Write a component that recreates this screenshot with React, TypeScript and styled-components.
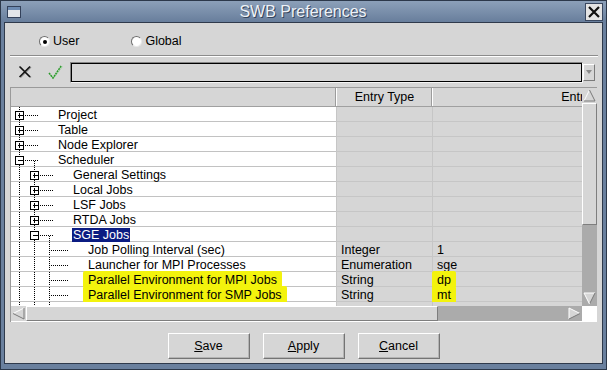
import React from "react";
import styled, { createGlobalStyle } from "styled-components";

const PANEL = "#d6d6d6";
const TRACK = "#ababab";
const FONT = `"Liberation Sans", Arial, sans-serif`;

//#region STYLES
const GlobalStyle = createGlobalStyle`
  html, body {
    margin: 0;
    padding: 0;
    background: ${PANEL};
  }
  body {
    font-family: ${FONT};
    font-size: 12.5px;
    color: #000;
  }
`;
const Frame = styled.div`
  width: 607px;
  height: 370px;
  box-sizing: border-box;
  display: flex;
  flex-direction: column;
  background: #6a809e;
  border: 1px solid #2c384a;
  padding: 0 3px 5px 3px;
`;
const TitleBar = styled.div`
  height: 21px;
  flex-shrink: 0;
  display: flex;
  align-items: center;
  margin: 0 -3px;
  padding: 0 3px 0 6px;
  background: linear-gradient(#8ca0b9, #687e9c);
`;
const Title = styled.div`
  flex: 1;
  text-align: center;
  font-size: 16px;
  color: #eef2f7;
  text-shadow: 1px 1px 0 #34445c;
`;
const CloseButton = styled.div`
  width: 18px;
  height: 18px;
  box-sizing: border-box;
  background: #e4e4e4;
  border: 1px solid #3a4860;
  display: flex;
  align-items: center;
  justify-content: center;
`;
const Body = styled.div`
  flex: 1;
  display: flex;
  flex-direction: column;
  background: ${PANEL};
  border: 1px solid #2f3a4c;
`;
const RadioRow = styled.div`
  height: 32px;
  box-sizing: border-box;
  padding: 5px 0 0 34px;
  display: flex;
  align-items: center;
`;
const RadioOption = styled.label<{ $gap: number }>`
  display: flex;
  align-items: center;
  gap: 3px;
  margin-right: ${(p) => p.$gap}px;
  line-height: 15px;
`;
const RadioDot = styled.span<{ $on: boolean }>`
  width: 11px;
  height: 11px;
  box-sizing: border-box;
  border-radius: 50%;
  background: #fff;
  border: 1px solid;
  border-color: #6e6e6e #e8e8e8 #e8e8e8 #6e6e6e;
  display: flex;
  align-items: center;
  justify-content: center;

  &::after {
    content: "";
    width: 4px;
    height: 4px;
    border-radius: 50%;
    background: ${(p) => (p.$on ? "#000" : "transparent")};
  }
`;
const Separator = styled.div`
  margin: 0 4px 0 5px;
  border-top: 1px solid #8c8c8c;
  border-bottom: 1px solid #fff;
`;
const Toolbar = styled.div`
  height: 30px;
  display: flex;
  align-items: center;
  padding: 0 7px 0 13px;
`;
const ToolIcon = styled.svg<{ $gap: number }>`
  flex-shrink: 0;
  margin-right: ${(p) => p.$gap}px;
`;
const Field = styled.div`
  flex: 1;
  height: 21px;
  box-sizing: border-box;
  border: 1px solid;
  border-color: #858585 #f4f4f4 #f4f4f4 #858585;
  box-shadow: inset 1px 1px 0 #000, inset -1px -1px 0 #000;
  background: ${PANEL};
`;
const DropButton = styled.div`
  width: 12px;
  height: 17px;
  box-sizing: border-box;
  border: 1px solid;
  border-color: #fff #7a7a7a #7a7a7a #fff;
  display: flex;
  align-items: center;
  justify-content: center;
`;
const TableFrame = styled.div`
  align-self: flex-start;
  margin-left: 5px;
  border-left: 1px solid #9a9a9a;
  border-top: 1px solid #9a9a9a;
  display: grid;
  grid-template-columns: 571px 15px;
  grid-template-rows: 218px 16px;
`;
const View = styled.div`
  overflow: hidden;
  background: #fff;
`;
const HeaderRow = styled.div`
  display: flex;
  height: 19px;
  box-sizing: border-box;
  border-bottom: 1px solid #a0a0a0;
  background: ${PANEL};
`;
const ColHeader = styled.div<{ $w: number; $first?: boolean }>`
  width: ${(p) => p.$w}px;
  flex-shrink: 0;
  box-sizing: border-box;
  border-left: ${(p) => (p.$first ? "none" : "1px solid #fff")};
  box-shadow: inset -1px 0 0 #9c9c9c;
  line-height: 18px;
  text-align: center;
  white-space: nowrap;
`;
const Row = styled.div`
  display: flex;
  height: 15px;
`;
const TreeCell = styled.div`
  width: 325px;
  height: 15px;
  flex-shrink: 0;
  box-sizing: border-box;
  display: flex;
  align-items: flex-start;
  background: #fff;
  border-bottom: 1px solid #c2c2c2;
`;
const DataCell = styled.div<{ $w: number }>`
  width: ${(p) => p.$w}px;
  height: 15px;
  flex-shrink: 0;
  box-sizing: border-box;
  padding-left: 4px;
  background: ${PANEL};
  border-left: 1px solid #c6c6c6;
  border-bottom: 1px solid #c6c6c6;
  white-space: nowrap;
`;
const Label = styled.span<{ $selected?: boolean }>`
  margin-top: 1px;
  line-height: 14px;
  white-space: nowrap;
  padding: 0 1px;
  color: ${(p) => (p.$selected ? "#fff" : "#000")};
  background: ${(p) => (p.$selected ? "#0b1c82" : "transparent")};
`;
const CellText = styled.span`
  display: inline-block;
  margin-top: 1px;
  line-height: 14px;
`;
const Mark = styled.span`
  background: #f3f30d;
  padding: 2px 5px;
  margin: 0 -5px;
  border-radius: 2px;
`;
const VScroll = styled.div`
  display: flex;
  flex-direction: column;
  background: ${TRACK};
`;
const HScroll = styled.div`
  display: flex;
  height: 15px;
  border-bottom: 1px solid #fff;
  background: ${TRACK};
`;
const Thumb = styled.div<{ $size: number; $horizontal?: boolean }>`
  ${(p) => (p.$horizontal ? "width" : "height")}: ${(p) => p.$size}px;
  flex-shrink: 0;
  box-sizing: border-box;
  background: ${PANEL};
  border: 1px solid;
  border-color: #fff #7e7e7e #7e7e7e #fff;
`;
const Track = styled.div`
  flex: 1;
`;
const Corner = styled.div`
  background: #fff;
`;
const ButtonRow = styled.div`
  flex: 1;
  display: flex;
  justify-content: center;
  align-items: flex-start;
  gap: 13px;
  padding-top: 11px;
`;
const Button = styled.button`
  width: 82px;
  height: 26px;
  padding: 0;
  font-family: ${FONT};
  font-size: 12.5px;
  color: #000;
  background: ${PANEL};
  border: 1px solid;
  border-color: #fff #747474 #747474 #fff;
  box-shadow: inset -1px -1px 0 #b4b4b4;

  u {
    text-decoration: underline;
  }
`;
//#endregion

type Kind = "plus" | "minus" | "leaf";

type Node = {
  label: string;
  level: number;
  kind: Kind;
  selected?: boolean;
  marked?: boolean;
  type?: string;
  value?: string;
};

const nodes: Node[] = [
  { label: "Project", level: 0, kind: "plus" },
  { label: "Table", level: 0, kind: "plus" },
  { label: "Node Explorer", level: 0, kind: "plus" },
  { label: "Scheduler", level: 0, kind: "minus" },
  { label: "General Settings", level: 1, kind: "plus" },
  { label: "Local Jobs", level: 1, kind: "plus" },
  { label: "LSF Jobs", level: 1, kind: "plus" },
  { label: "RTDA Jobs", level: 1, kind: "plus" },
  { label: "SGE Jobs", level: 1, kind: "minus", selected: true },
  { label: "Job Polling Interval (sec)", level: 2, kind: "leaf", type: "Integer", value: "1" },
  { label: "Launcher for MPI Processes", level: 2, kind: "leaf", type: "Enumeration", value: "sge" },
  { label: "Parallel Environment for MPI Jobs", level: 2, kind: "leaf", type: "String", value: "dp", marked: true },
  { label: "Parallel Environment for SMP Jobs", level: 2, kind: "leaf", type: "String", value: "mt", marked: true },
  { label: "", level: 2, kind: "leaf" },
];

const Dotted = (p: { x1: number; y1: number; x2: number; y2: number }) => (
  <line {...p} stroke="#000" strokeDasharray="1 1" />
);

const TreeLines = ({ level, kind }: { level: number; kind: Kind }) => {
  const width = 46 + 15 * level;
  const cx = 8.5 + 15 * level;
  const guides = Array.from({ length: level }, (_, i) => 8.5 + 15 * i);

  return (
    <svg width={width} height={14} shapeRendering="crispEdges" style={{ flexShrink: 0 }}>
      {guides.map((x) => (
        <Dotted key={x} x1={x} y1={0} x2={x} y2={14} />
      ))}
      {kind === "leaf" ? (
        <>
          <Dotted x1={cx} y1={0} x2={cx} y2={14} />
          <Dotted x1={cx + 1} y1={8.5} x2={cx + 19} y2={8.5} />
        </>
      ) : (
        <>
          <Dotted x1={cx} y1={0} x2={cx} y2={4} />
          <Dotted x1={cx} y1={13} x2={cx} y2={14} />
          <rect x={cx - 4} y={4.5} width={8} height={8} fill="#fff" stroke="#000" />
          <line x1={cx - 2} y1={8.5} x2={cx + 3} y2={8.5} stroke="#000" />
          {kind === "plus" && <line x1={cx} y1={6} x2={cx} y2={11} stroke="#000" />}
          <Dotted x1={cx + 5} y1={8.5} x2={cx + 19} y2={8.5} />
          {kind === "minus" && <Dotted x1={cx + 15} y1={9} x2={cx + 15} y2={14} />}
        </>
      )}
    </svg>
  );
};

type Dir = "up" | "down" | "left" | "right";

// triangle corners, then which edges are lit (white) vs shaded
const arrowShapes: Record<Dir, { pts: [number, number][]; lit: boolean[] }> = {
  up: { pts: [[2, 13], [7.5, 2], [13, 13]], lit: [true, false, false] },
  down: { pts: [[2, 2], [13, 2], [7.5, 13]], lit: [true, false, true] },
  left: { pts: [[2, 7.5], [13, 2], [13, 13]], lit: [true, false, false] },
  right: { pts: [[2, 13], [2, 2], [13, 7.5]], lit: [true, true, false] },
};

const ScrollArrow = ({ dir, bg }: { dir: Dir; bg: string }) => {
  const { pts, lit } = arrowShapes[dir];
  return (
    <svg width={15} height={15} style={{ flexShrink: 0, background: bg, display: "block" }}>
      <polygon points={pts.map((p) => p.join(",")).join(" ")} fill={PANEL} />
      {pts.map((p, i) => {
        const q = pts[(i + 1) % pts.length];
        return (
          <line
            key={i}
            x1={p[0]}
            y1={p[1]}
            x2={q[0]}
            y2={q[1]}
            stroke={lit[i] ? "#fff" : "#7a7a7a"}
          />
        );
      })}
    </svg>
  );
};

const WindowIcon = () => (
  <svg width={14} height={12} style={{ flexShrink: 0 }} shapeRendering="crispEdges">
    <rect x={0.5} y={0.5} width={13} height={11} fill="#e2e5ea" stroke="#33415a" />
    <rect x={1} y={1} width={12} height={3} fill="#6d8bb2" />
  </svg>
);

const App = () => {
  return (
    <>
      <GlobalStyle />
      <Frame>
        <TitleBar>
          <WindowIcon />
          <Title>SWB Preferences</Title>
          <CloseButton>
            <svg width={14} height={14}>
              <path d="M2 2 L12 12 M12 2 L2 12" stroke="#111" strokeWidth={2.2} />
            </svg>
          </CloseButton>
        </TitleBar>
        <Body>
          <RadioRow>
            <RadioOption $gap={52}>
              <RadioDot $on />
              User
            </RadioOption>
            <RadioOption $gap={0}>
              <RadioDot $on={false} />
              Global
            </RadioOption>
          </RadioRow>
          <Separator />
          <Toolbar>
            <ToolIcon width={14} height={14} $gap={16}>
              <path d="M2.5 2 L13 12.5 M13 2 L2.5 12.5" stroke="#8c8c8c" strokeWidth={1.2} />
              <path d="M1.5 1.5 L12 12 M12 1.5 L1.5 12" stroke="#111" strokeWidth={1.5} />
            </ToolIcon>
            <ToolIcon width={15} height={16} $gap={7}>
              <path d="M2 10 L5.5 14.5 L14.5 2.5" fill="none" stroke="#a8d4a8" strokeWidth={1} />
              <path d="M1 9 L5 14 L13.5 1.5" fill="none" stroke="#2a9a2a" strokeWidth={1.5} strokeDasharray="2 0.7" />
            </ToolIcon>
            <Field />
            <DropButton>
              <svg width={6} height={4}>
                <polygon points="0,0 6,0 3,4" fill="#8a8a8a" />
              </svg>
            </DropButton>
          </Toolbar>
          <TableFrame>
            <View>
              <HeaderRow>
                <ColHeader $w={325} $first />
                <ColHeader $w={96}>Entry Type</ColHeader>
                <ColHeader $w={321}>Entry Value</ColHeader>
              </HeaderRow>
              {nodes.map((n, i) => (
                <Row key={i}>
                  <TreeCell>
                    <TreeLines level={n.level} kind={n.kind} />
                    <Label $selected={n.selected}>
                      {n.marked ? <Mark>{n.label}</Mark> : n.label}
                    </Label>
                  </TreeCell>
                  <DataCell $w={96}>
                    <CellText>{n.type}</CellText>
                  </DataCell>
                  <DataCell $w={321}>
                    <CellText>{n.marked ? <Mark>{n.value}</Mark> : n.value}</CellText>
                  </DataCell>
                </Row>
              ))}
            </View>
            <VScroll>
              <ScrollArrow dir="up" bg={PANEL} />
              <Thumb $size={122} />
              <Track />
              <ScrollArrow dir="down" bg={TRACK} />
            </VScroll>
            <HScroll>
              <ScrollArrow dir="left" bg={PANEL} />
              <Thumb $size={412} $horizontal />
              <Track />
              <ScrollArrow dir="right" bg={TRACK} />
            </HScroll>
            <Corner />
          </TableFrame>
          <ButtonRow>
            <Button type="button">
              <u>S</u>ave
            </Button>
            <Button type="button">
              <u>A</u>pply
            </Button>
            <Button type="button">
              <u>C</u>ancel
            </Button>
          </ButtonRow>
        </Body>
      </Frame>
    </>
  );
};

export default App;
